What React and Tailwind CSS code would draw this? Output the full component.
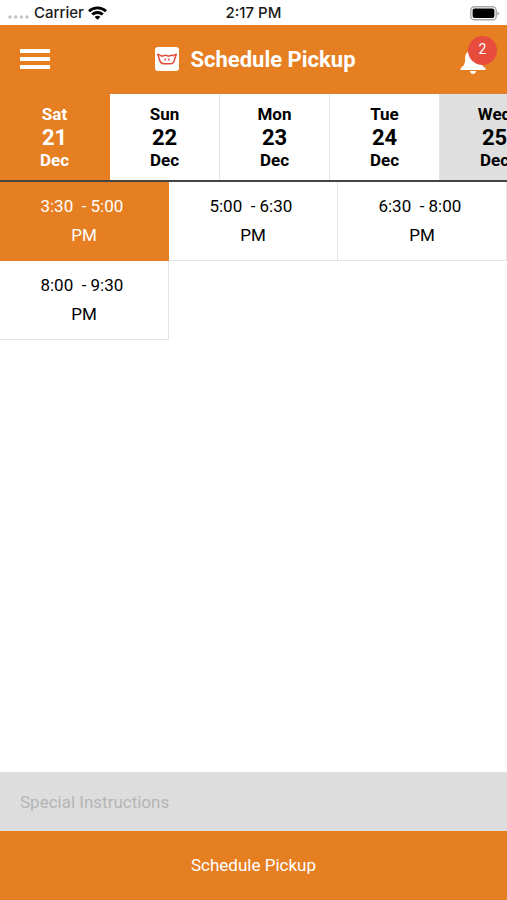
import React, { useState } from "react";

const days = [
  { id: 1, name: "Sat", date: 21, month: "Dec" },
  { id: 2, name: "Sun", date: 22, month: "Dec" },
  { id: 3, name: "Mon", date: 23, month: "Dec" },
  { id: 4, name: "Tue", date: 24, month: "Dec" },
  { id: 5, name: "Wed", date: 25, month: "Dec", closed: true },
];

const slots = [
  { id: 1, from: "3:30", to: "5:00" },
  { id: 2, from: "5:00", to: "6:30" },
  { id: 3, from: "6:30", to: "8:00" },
  { id: 4, from: "8:00", to: "9:30" },
];

function StatusBar() {
  return (
    <div className="grid h-[25px] grid-cols-3 items-center bg-white px-2 pt-px font-[Inter,sans-serif] text-[15px] font-medium text-[#1a1a1a]">
      <div className="flex items-center">
        <svg className="mt-2 h-1 w-[21px]" viewBox="0 0 21 4" fill="#c4c4c4">
          <circle cx="2" cy="2" r="1.7" />
          <circle cx="7.7" cy="2" r="1.7" />
          <circle cx="13.4" cy="2" r="1.7" />
          <circle cx="19" cy="2" r="1.7" />
        </svg>
        <span className="ml-[5px]">Carrier</span>
        <svg className="ml-1 h-[14px] w-[19px]" viewBox="0 0 19 14" fill="none" stroke="#000" strokeWidth="2.8">
          <path d="M1 5.2C5.8.7 13.2.7 18 5.2" />
          <path d="M4.2 8.6c3-2.8 7.6-2.8 10.6 0" />
          <path d="M9.5 13.8 6.6 10.9c1.6-1.5 4.2-1.5 5.8 0z" fill="#000" stroke="none" />
        </svg>
      </div>
      <span className="text-center">2:17 PM</span>
      <svg className="h-[15px] w-[30px] justify-self-end" viewBox="0 0 30 15">
        <rect x="1.8" y="0.8" width="25.4" height="13" rx="3.6" fill="#fff" stroke="#a8a8a8" strokeWidth="1.4" />
        <rect x="3.6" y="2.6" width="21.8" height="9.4" rx="2" fill="#000" />
        <path d="M28.4 5.2c2 .8 2 3.6 0 4.4z" fill="#a0a0a0" />
      </svg>
    </div>
  );
}

function WashLogo() {
  return (
    <svg className="h-6 w-6" viewBox="0 0 24 24" fill="none" stroke="#e04a35" strokeWidth="1.5">
      <rect width="24" height="24" rx="3" fill="#fff" stroke="none" />
      <path d="M2.6 6.8 4.8 13.6Q5.8 16.8 8.6 16.8h6.8Q18.200 16.8 19.200 13.6L21.400 6.8" strokeLinejoin="round" />
      <path d="M2.600 7.400q1.900.2 3.200 1.200 1.500.9 3 0 1.600-.9 3.200 0 1.600.9 3.200 0 1.500-.9 3 0Q19.500 7.600 21.400 7.400" />
      <circle cx="10.2" cy="12.500" r="0.9" fill="#e04a35" stroke="none" />
      <circle cx="13.8" cy="12.500" r="0.9" fill="#e04a35" stroke="none" />
    </svg>
  );
}

export default function App() {
  const [day, setDay] = useState(1);
  const [slot, setSlot] = useState(1);
  const [note, setNote] = useState("");

  return (
    <div className="flex min-h-screen flex-col bg-white font-[Roboto,sans-serif] text-black">
      <StatusBar />

      <header className="flex h-[69px] items-center justify-between border-b border-[#d9812f] bg-[#e67e22] px-5 text-white">
        <button className="w-[30px]" aria-label="Menu">
          <svg className="h-5 w-[30px]" viewBox="0 0 30 20" fill="#fff">
            <rect y="0" width="30" height="4" />
            <rect y="8" width="30" height="4" />
            <rect y="16" width="30" height="4" />
          </svg>
        </button>
        <div className="flex items-center gap-3">
          <WashLogo />
          <h1 className="text-[22px] font-bold">Schedule Pickup</h1>
        </div>
        <button className="relative w-[27px]" aria-label="Notifications">
          <svg className="mt-1 h-[26px] w-[26px]" viewBox="0 0 26 26" fill="#fff">
            <path d="M13 0c-1.2 0-2 .8-2 1.9C7.4 2.9 5.2 6 5.2 9.8c0 6-1 8-4.7 10.4V22h25v-1.8c-3.7-2.4-4.7-4.4-4.7-10.4 0-3.8-2.2-6.9-5.8-7.9C15 .8 14.2 0 13 0z" />
            <path d="M9.8 23h6.4c-.3 1.8-1.5 2.9-3.2 2.9s-2.9-1.1-3.2-2.9z" />
          </svg>
          <span className="absolute -top-2 left-2 flex h-[29px] w-[29px] items-center justify-center rounded-full bg-[#e74c3c] pb-1 text-sm">
            2
          </span>
        </button>
      </header>

      <div className="flex overflow-x-auto border-b-2 border-[#444] [scrollbar-width:none]">
        {days.map((d) => (
          <button
            key={d.id}
            disabled={d.closed}
            onClick={() => setDay(d.id)}
            className={`flex h-[86px] w-[110px] shrink-0 flex-col items-center justify-center border-r text-[17px] leading-[23px] font-bold ${
              d.id === day
                ? "border-[#e67e22] bg-[#e67e22] text-white"
                : d.closed
                  ? "border-[#dfdfdf] bg-[#dfdfdf]"
                  : "border-[#e4e4e4] bg-white"
            }`}
          >
            <span>{d.name}</span>
            <span className="text-[22px]">{d.date}</span>
            <span>{d.month}</span>
          </button>
        ))}
      </div>

      <main className="grid flex-1 grid-cols-3 content-start">
        {slots.map((s) => (
          <button
            key={s.id}
            onClick={() => setSlot(s.id)}
            className={`h-[79px] border-r border-b text-[17px] leading-[29px] ${
              s.id === slot ? "border-[#e67e22] bg-[#e67e22] text-white" : "border-[#e4e4e4] bg-white"
            }`}
          >
            <span className="block whitespace-pre">{`${s.from}  - ${s.to} `}</span>
            <span className="block">PM</span>
          </button>
        ))}
      </main>

      <input
        type="text"
        aria-label="Special Instructions"
        placeholder="Special Instructions"
        value={note}
        onChange={(e) => setNote(e.target.value)}
        className="h-[59px] w-full bg-[#dddddd] px-5 text-[17px] outline-none placeholder:text-[#b5b5b5]"
      />
      <button className="h-[69px] w-full bg-[#e67e22] text-[17px] text-white">Schedule Pickup</button>
    </div>
  );
}
